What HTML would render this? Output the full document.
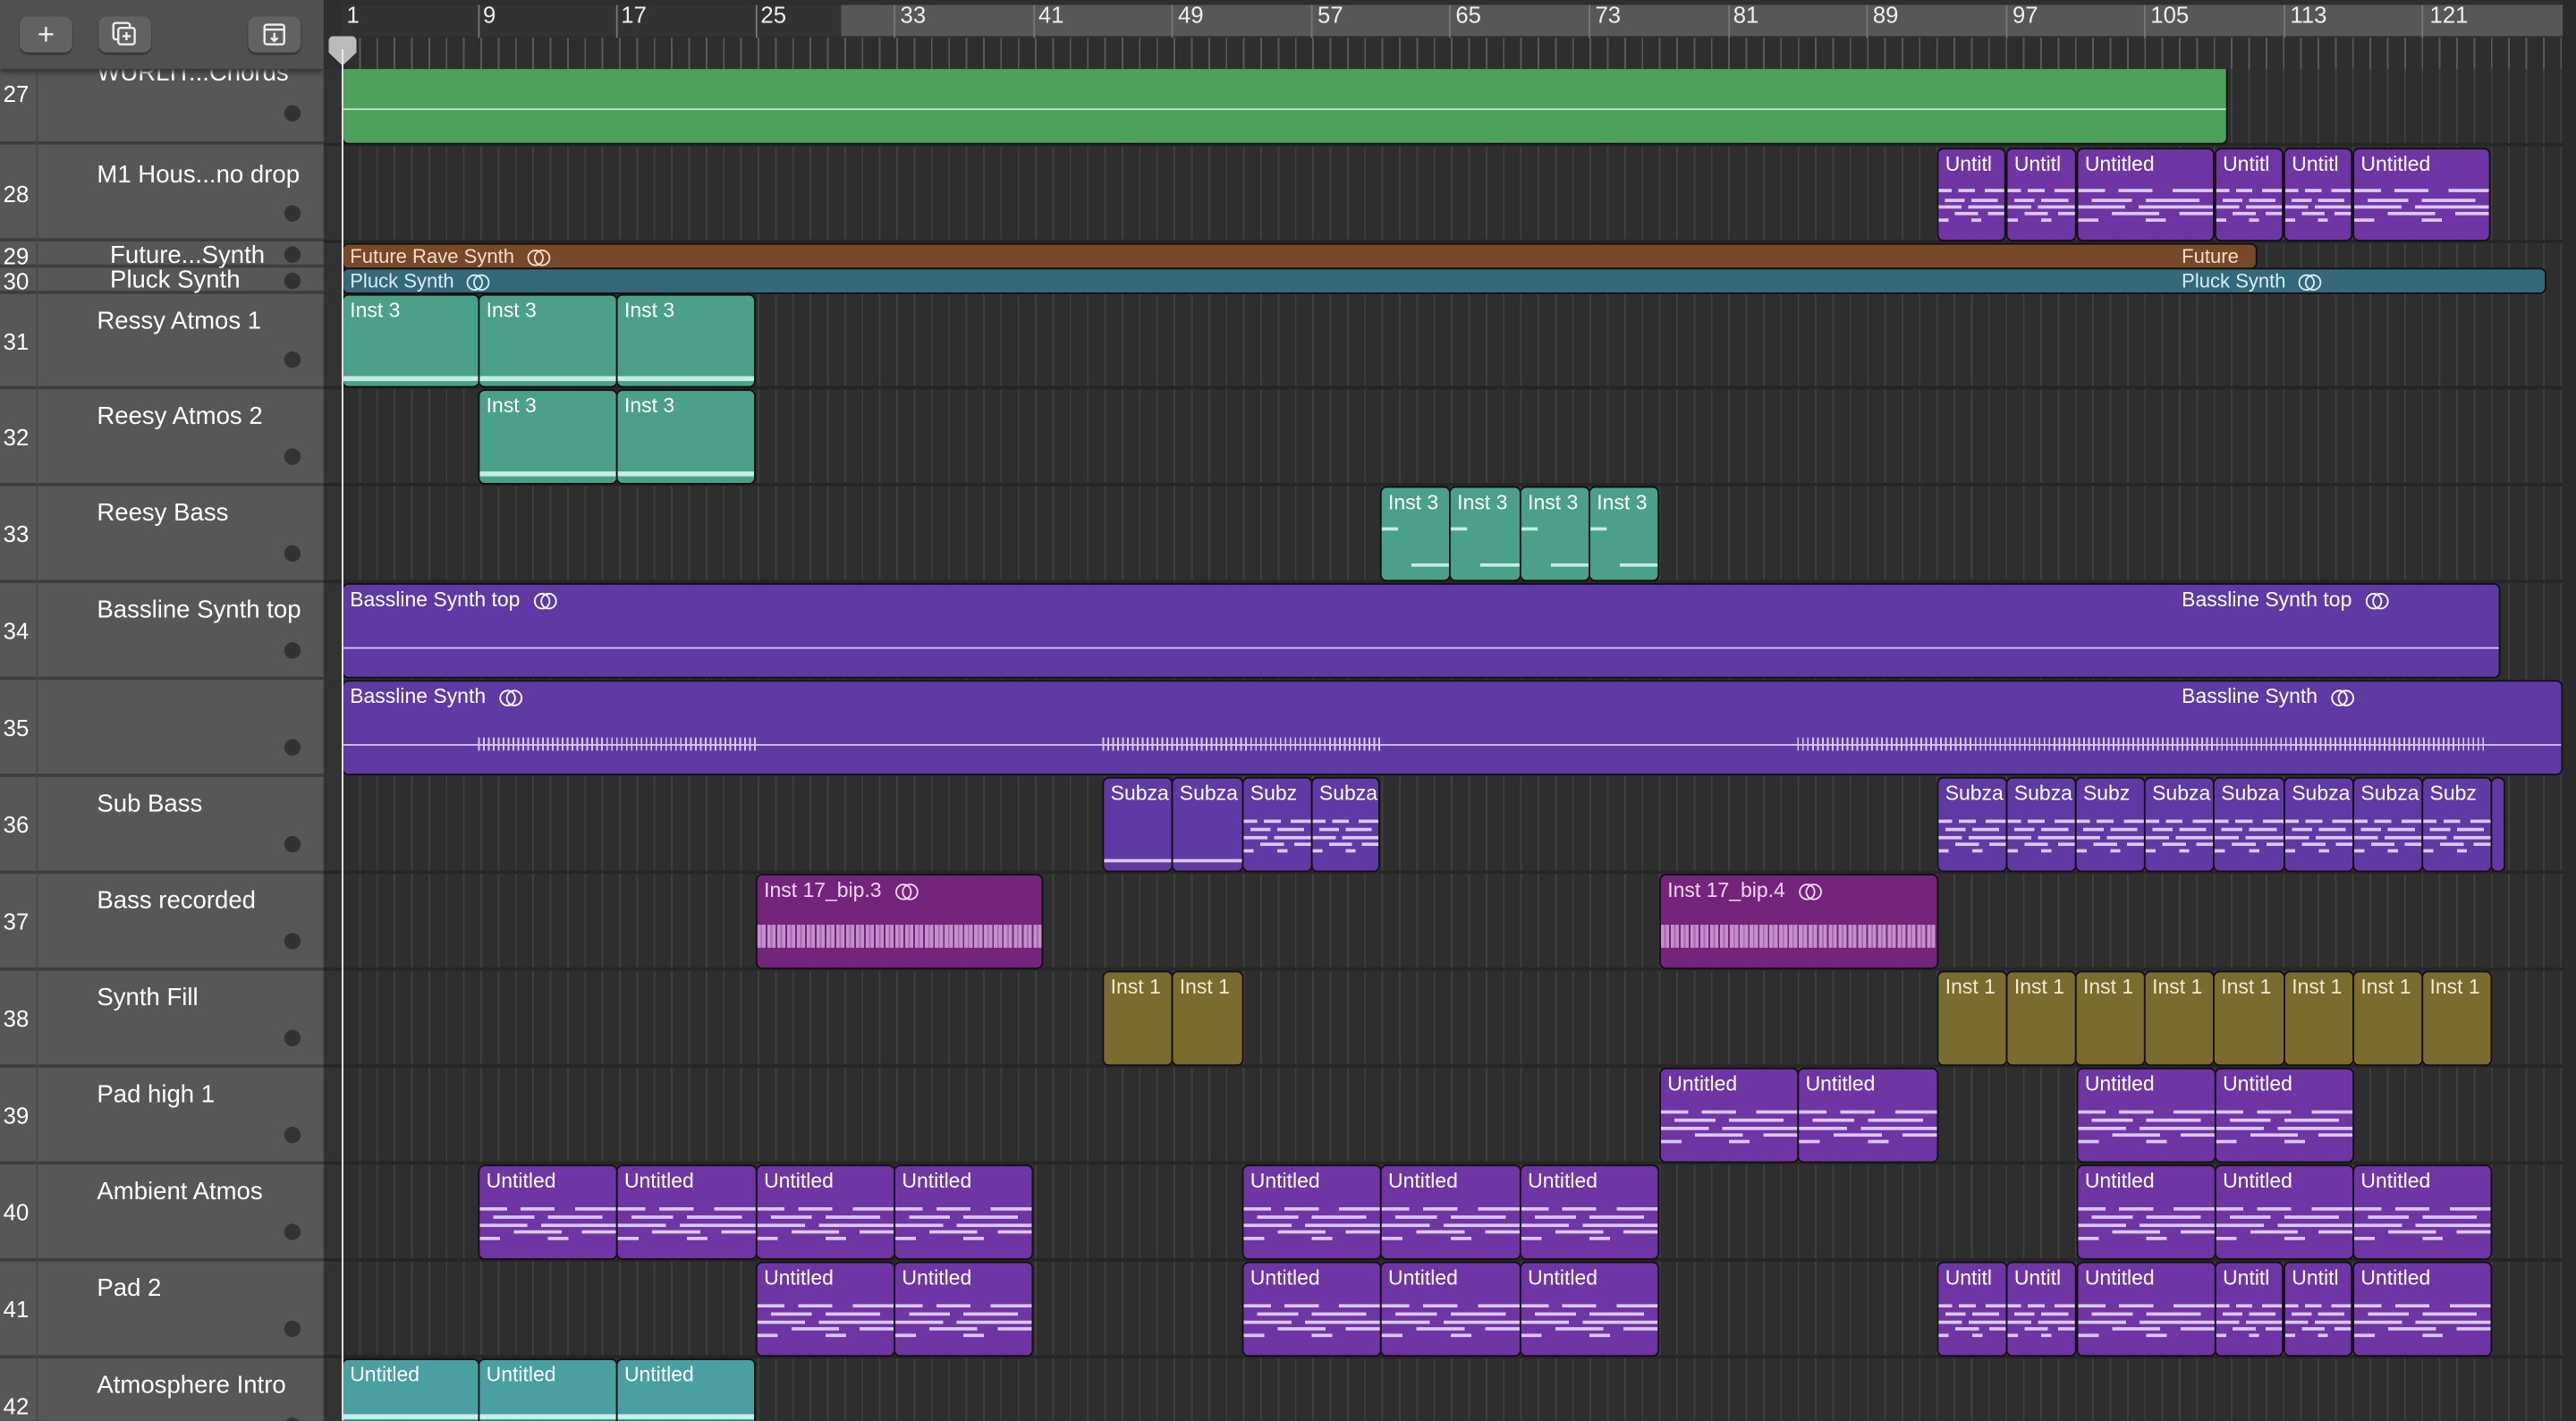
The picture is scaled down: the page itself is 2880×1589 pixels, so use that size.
<!DOCTYPE html>
<html><head><meta charset="utf-8"><style>
html,body{margin:0;padding:0;background:#2e2e2e;overflow:hidden;width:2880px;height:1588px}
#w{position:absolute;left:0;top:0;width:1568px;height:865px;transform:scale(1.836735);transform-origin:0 0;font-family:"Liberation Sans",sans-serif;overflow:hidden;background:#2e2e2e}
.grid{position:absolute;left:208px;top:42px;right:0;bottom:0;background:repeating-linear-gradient(90deg,#3f3f3f 0 1px,transparent 1px 10.55px)}
.hl{position:absolute;left:197px;right:0;height:2px;background:#262626}
.lp{position:absolute;left:0;width:197px;background:#575757;border-bottom:2px solid #3e3e3e;box-sizing:border-box}
.lp .n{position:absolute;left:2px;color:#fff;font-size:14px}
.lp .t{position:absolute;left:59px;color:#fff;font-size:15px;white-space:nowrap}
.lp .d{position:absolute;left:173px;width:10px;height:10px;border-radius:50%;background:#333}
.col{position:absolute;left:22px;top:42px;bottom:0;width:1px;background:#474747;z-index:3}
.r{position:absolute;border:1px solid #111;border-radius:4px;box-sizing:border-box;overflow:hidden;font-size:12.5px;color:#fff;padding:2px 4px;white-space:nowrap}
.p{background:#7035a5}.b{background:#5f3aa4}.g{background:#4aa08a}.o{background:#7a6b2e}.m{background:#74247a}.a{background:#4a9fa0}
.nt{position:absolute;left:0;right:0;top:44%;height:36%;background:
linear-gradient(90deg,#dcc6f2 0 20%,transparent 20% 30%,#dcc6f2 30% 55%,transparent 55% 70%,#dcc6f2 70%) 0 0/100% 2px no-repeat,
linear-gradient(90deg,transparent 0 10%,#dcc6f2 10% 40%,transparent 40% 50%,#dcc6f2 50% 90%,transparent 90%) 0 30%/100% 2px no-repeat,
linear-gradient(90deg,#dcc6f2 0 35%,transparent 35% 45%,#dcc6f2 45% 100%) 0 55%/100% 2px no-repeat,
linear-gradient(90deg,transparent 0 25%,#dcc6f2 25% 60%,transparent 60% 75%,#dcc6f2 75%) 0 80%/100% 2px no-repeat,
linear-gradient(90deg,#dcc6f2 0 15%,transparent 15% 50%,#dcc6f2 50% 65%,transparent 65%) 0 100%/100% 2px no-repeat}
.wl{position:absolute;left:0;right:0;height:1px;background:#ddd}
.wv{position:absolute;left:0;right:0;top:30px;height:14px;background:repeating-linear-gradient(90deg,#c48fcc 0 2px,#a66aae 2px 3px,#c48fcc 3px 5px,transparent 5px 6px)}
.ic{display:inline-block;margin-left:8px;width:14px;height:9px;vertical-align:-1px;position:relative}
.ic:before,.ic:after{content:"";position:absolute;top:0;width:8px;height:8px;border:1px solid currentColor;border-radius:50%}
.ic:before{left:0}.ic:after{left:4px}
.btn{position:absolute;top:10px;width:32px;height:22px;border-radius:5px;background:#626262;box-shadow:0 1px 1px #333;color:#eee;text-align:center;font-size:18px;line-height:22px}
.rn{position:absolute;top:1px;color:#eee;font-size:14px}
.rt{position:absolute;top:3px;height:20px;width:1px;background:#777}
</style></head><body><div id="w">
<div class="grid"></div>
<div style="position:absolute;left:197px;top:42px;width:11px;bottom:0;background:#333"></div>
<!-- ruler -->
<div style="position:absolute;left:197px;top:0;right:0;height:42px;background:#2e2e2e"></div>
<div style="position:absolute;left:208px;top:3px;width:304px;height:19px;background:#333"></div>
<div style="position:absolute;left:512px;top:3px;right:8px;height:19px;background:#575757"></div>
<div style="position:absolute;left:208px;top:23px;right:0;height:19px;background:repeating-linear-gradient(90deg,#5a5a5a 0 1px,transparent 1px 10.55px)"></div>
<div class="rn" style="left:211px">1</div><div class="rn" style="left:294px">9</div><div class="rn" style="left:378px">17</div><div class="rn" style="left:463px">25</div><div class="rn" style="left:548px">33</div><div class="rn" style="left:632px">41</div><div class="rn" style="left:717px">49</div><div class="rn" style="left:802px">57</div><div class="rn" style="left:886px">65</div><div class="rn" style="left:971px">73</div><div class="rn" style="left:1055px">81</div><div class="rn" style="left:1140px">89</div><div class="rn" style="left:1225px">97</div><div class="rn" style="left:1309px">105</div><div class="rn" style="left:1394px">113</div><div class="rn" style="left:1479px">121</div>
<div class="rt" style="left:291px"></div><div class="rt" style="left:375px"></div><div class="rt" style="left:460px"></div><div class="rt" style="left:544px"></div><div class="rt" style="left:629px"></div><div class="rt" style="left:713px"></div><div class="rt" style="left:798px"></div><div class="rt" style="left:882px"></div><div class="rt" style="left:967px"></div><div class="rt" style="left:1052px"></div><div class="rt" style="left:1136px"></div><div class="rt" style="left:1221px"></div><div class="rt" style="left:1305px"></div><div class="rt" style="left:1390px"></div><div class="rt" style="left:1474px"></div>
<div style="position:absolute;left:200px;top:22px;width:17px;height:18px;background:#bbb;border-radius:3px 3px 0 0;clip-path:polygon(0 0,100% 0,100% 55%,50% 100%,0 55%)"></div>
<!-- track headers -->
<div class="lp" style="top:42px;height:46px"><div class="t" style="top:-6px">WURLIT...Chords</div><div class="n" style="top:7px">27</div><div class="d" style="top:22px"></div></div>
<div class="lp" style="top:88px;height:59px"><div class="t" style="top:10px">M1 Hous...no drop</div><div class="n" style="top:22px">28</div><div class="d" style="top:37px"></div></div>
<div class="lp" style="top:147px;height:16px"><div class="t" style="top:0px;left:67px">Future...Synth</div><div class="n" style="top:1px">29</div><div class="d" style="top:3px"></div></div>
<div class="lp" style="top:163px;height:16px"><div class="t" style="top:-1px;left:67px">Pluck Synth</div><div class="n" style="top:0px">30</div><div class="d" style="top:3px"></div></div>
<div class="lp" style="top:179px;height:58px"><div class="t" style="top:8px">Ressy Atmos 1</div><div class="n" style="top:21px">31</div><div class="d" style="top:35px"></div></div>
<div class="lp" style="top:237px;height:59px"><div class="t" style="top:8px">Reesy Atmos 2</div><div class="n" style="top:21px">32</div><div class="d" style="top:36px"></div></div>
<div class="lp" style="top:296px;height:59px"><div class="t" style="top:8px">Reesy Bass</div><div class="n" style="top:21px">33</div><div class="d" style="top:36px"></div></div>
<div class="lp" style="top:355px;height:59px"><div class="t" style="top:8px">Bassline Synth top</div><div class="n" style="top:21px">34</div><div class="d" style="top:36px"></div></div>
<div class="lp" style="top:414px;height:59px"><div class="n" style="top:21px">35</div><div class="d" style="top:36px"></div></div>
<div class="lp" style="top:473px;height:59px"><div class="t" style="top:8px">Sub Bass</div><div class="n" style="top:21px">36</div><div class="d" style="top:36px"></div></div>
<div class="lp" style="top:532px;height:59px"><div class="t" style="top:8px">Bass recorded</div><div class="n" style="top:21px">37</div><div class="d" style="top:36px"></div></div>
<div class="lp" style="top:591px;height:59px"><div class="t" style="top:8px">Synth Fill</div><div class="n" style="top:21px">38</div><div class="d" style="top:36px"></div></div>
<div class="lp" style="top:650px;height:59px"><div class="t" style="top:8px">Pad high 1</div><div class="n" style="top:21px">39</div><div class="d" style="top:36px"></div></div>
<div class="lp" style="top:709px;height:59px"><div class="t" style="top:8px">Ambient Atmos</div><div class="n" style="top:21px">40</div><div class="d" style="top:36px"></div></div>
<div class="lp" style="top:768px;height:59px"><div class="t" style="top:8px">Pad 2</div><div class="n" style="top:21px">41</div><div class="d" style="top:36px"></div></div>
<div class="lp" style="top:827px;height:59px"><div class="t" style="top:8px">Atmosphere Intro</div><div class="n" style="top:21px">42</div><div class="d" style="top:36px"></div></div>
<div class="col"></div>
<!-- left panel header (on top) -->
<div style="position:absolute;left:0;top:0;width:197px;height:42px;background:#505050;box-shadow:0 2px 3px #333;z-index:4">
<div class="btn" style="left:12px">+</div>
<div class="btn" style="left:60px"><svg width="16" height="16" viewBox="0 0 16 16" style="margin-top:3px" fill="none" stroke="#eee" stroke-width="1.3"><rect x="1" y="1" width="10" height="10" rx="1.5"/><rect x="4" y="4" width="10" height="10" rx="1.5" fill="#626262"/><path d="M9 6.5v5M6.5 9h5"/></svg></div>
<div class="btn" style="left:151px"><svg width="16" height="16" viewBox="0 0 16 16" style="margin-top:3px" fill="none" stroke="#eee" stroke-width="1.3"><rect x="2" y="2" width="12" height="12" rx="1.5"/><path d="M2 5h12M8 7v5M6 10l2 2 2-2"/></svg></div>
</div>
<div class="hl" style="top:87px"></div><div class="hl" style="top:146px"></div><div class="hl" style="top:235px"></div><div class="hl" style="top:294px"></div><div class="hl" style="top:353px"></div><div class="hl" style="top:530px"></div><div class="hl" style="top:589px"></div><div class="hl" style="top:648px"></div><div class="hl" style="top:707px"></div><div class="hl" style="top:766px"></div><div class="hl" style="top:825px"></div>
<!-- regions -->
<div class="r" style="left:208px;top:42px;width:1148px;height:46px;background:#4ea15a;border-top:none;border-radius:0 0 4px 4px"><div class="wl" style="top:24px;background:#bfe3c3"></div></div>
<div class="r p" style="left:1179px;top:90px;width:42px;height:57px">Untitl<div class="nt"></div></div>
<div class="r p" style="left:1221px;top:90px;width:43px;height:57px">Untitl<div class="nt"></div></div>
<div class="r p" style="left:1264px;top:90px;width:84px;height:57px">Untitled<div class="nt"></div></div>
<div class="r p" style="left:1348px;top:90px;width:42px;height:57px">Untitl<div class="nt"></div></div>
<div class="r p" style="left:1390px;top:90px;width:42px;height:57px">Untitl<div class="nt"></div></div>
<div class="r p" style="left:1432px;top:90px;width:84px;height:57px">Untitled<div class="nt"></div></div>
<div class="r" style="left:208px;top:148px;width:1166px;height:16px;background:#784828;color:#f3dcc8;padding:0 4px;font-size:12px;line-height:15px">Future Rave Synth<span class="ic"></span><span style="position:absolute;left:1119px">Future</span></div>
<div class="r" style="left:208px;top:163px;width:1342px;height:16px;background:#356878;color:#d6eef5;padding:0 4px;font-size:12px;line-height:15px">Pluck Synth<span class="ic"></span><span style="position:absolute;left:1119px">Pluck Synth<span class="ic"></span></span></div>
<div class="r g" style="left:208px;top:179px;width:84px;height:57px">Inst 3<div class="wl" style="top:49px;height:3px;background:#c4ecdf"></div></div>
<div class="r g" style="left:291px;top:179px;width:85px;height:57px">Inst 3<div class="wl" style="top:49px;height:3px;background:#c4ecdf"></div></div>
<div class="r g" style="left:375px;top:179px;width:85px;height:57px">Inst 3<div class="wl" style="top:49px;height:3px;background:#c4ecdf"></div></div>
<div class="r g" style="left:291px;top:237px;width:85px;height:58px">Inst 3<div class="wl" style="top:49px;height:3px;background:#c4ecdf"></div></div>
<div class="r g" style="left:375px;top:237px;width:85px;height:58px">Inst 3<div class="wl" style="top:49px;height:3px;background:#c4ecdf"></div></div>
<div class="r g" style="left:840px;top:296px;width:43px;height:58px">Inst 3<div class="wl" style="top:24px;width:10px;height:2px;background:#c4ecdf"></div><div class="wl" style="top:46px;left:18px;height:2px;background:#c4ecdf"></div></div>
<div class="r g" style="left:882px;top:296px;width:44px;height:58px">Inst 3<div class="wl" style="top:24px;width:10px;height:2px;background:#c4ecdf"></div><div class="wl" style="top:46px;left:18px;height:2px;background:#c4ecdf"></div></div>
<div class="r g" style="left:925px;top:296px;width:43px;height:58px">Inst 3<div class="wl" style="top:24px;width:10px;height:2px;background:#c4ecdf"></div><div class="wl" style="top:46px;left:18px;height:2px;background:#c4ecdf"></div></div>
<div class="r g" style="left:967px;top:296px;width:43px;height:58px">Inst 3<div class="wl" style="top:24px;width:10px;height:2px;background:#c4ecdf"></div><div class="wl" style="top:46px;left:18px;height:2px;background:#c4ecdf"></div></div>
<div class="r b" style="left:208px;top:355px;width:1314px;height:58px">Bassline Synth top<span class="ic"></span><span style="position:absolute;left:1119px;top:2px">Bassline Synth top<span class="ic"></span></span><div class="wl" style="top:38px;background:#d8c8f0"></div></div>
<div class="r b" style="left:208px;top:414px;width:1352px;height:58px">Bassline Synth<span class="ic"></span><span style="position:absolute;left:1119px;top:2px">Bassline Synth<span class="ic"></span></span><div class="wl" style="top:38px;background:#d8c8f0"></div><div style="position:absolute;left:82px;width:170px;top:34px;height:8px;background:repeating-linear-gradient(90deg,#d8c8f0 0 1px,transparent 1px 3px)"></div><div style="position:absolute;left:462px;width:170px;top:34px;height:8px;background:repeating-linear-gradient(90deg,#d8c8f0 0 1px,transparent 1px 3px)"></div><div style="position:absolute;left:885px;width:420px;top:34px;height:8px;background:repeating-linear-gradient(90deg,#d8c8f0 0 1px,transparent 1px 3px)"></div></div>
<div class="r b" style="left:671px;top:473px;width:43px;height:58px">Subza<div class="wl" style="top:49px;height:2px;background:#d8c8f0"></div></div>
<div class="r b" style="left:713px;top:473px;width:44px;height:58px">Subza<div class="wl" style="top:49px;height:2px;background:#d8c8f0"></div></div>
<div class="r b" style="left:756px;top:473px;width:43px;height:58px">Subz<div class="nt"></div></div>
<div class="r b" style="left:798px;top:473px;width:42px;height:58px">Subza<div class="nt"></div></div>
<div class="r b" style="left:1179px;top:473px;width:43px;height:58px">Subza<div class="nt"></div></div>
<div class="r b" style="left:1221px;top:473px;width:43px;height:58px">Subza<div class="nt"></div></div>
<div class="r b" style="left:1263px;top:473px;width:43px;height:58px">Subz<div class="nt"></div></div>
<div class="r b" style="left:1305px;top:473px;width:43px;height:58px">Subza<div class="nt"></div></div>
<div class="r b" style="left:1347px;top:473px;width:44px;height:58px">Subza<div class="nt"></div></div>
<div class="r b" style="left:1390px;top:473px;width:43px;height:58px">Subza<div class="nt"></div></div>
<div class="r b" style="left:1432px;top:473px;width:43px;height:58px">Subza<div class="nt"></div></div>
<div class="r b" style="left:1474px;top:473px;width:43px;height:58px">Subz<div class="nt"></div></div>
<div class="r b" style="left:1516px;top:473px;width:9px;height:58px;padding:0"></div>
<div class="r m" style="left:460px;top:532px;width:175px;height:58px;color:#f0d8f2">Inst 17_bip.3<span class="ic"></span><div class="wv"></div></div>
<div class="r m" style="left:1010px;top:532px;width:170px;height:58px;color:#f0d8f2">Inst 17_bip.4<span class="ic"></span><div class="wv"></div></div>
<div class="r o" style="left:671px;top:591px;width:43px;height:58px;color:#f0ead0">Inst 1</div>
<div class="r o" style="left:713px;top:591px;width:44px;height:58px;color:#f0ead0">Inst 1</div>
<div class="r o" style="left:1179px;top:591px;width:43px;height:58px;color:#f0ead0">Inst 1</div>
<div class="r o" style="left:1221px;top:591px;width:43px;height:58px;color:#f0ead0">Inst 1</div>
<div class="r o" style="left:1263px;top:591px;width:43px;height:58px;color:#f0ead0">Inst 1</div>
<div class="r o" style="left:1305px;top:591px;width:43px;height:58px;color:#f0ead0">Inst 1</div>
<div class="r o" style="left:1347px;top:591px;width:44px;height:58px;color:#f0ead0">Inst 1</div>
<div class="r o" style="left:1390px;top:591px;width:43px;height:58px;color:#f0ead0">Inst 1</div>
<div class="r o" style="left:1432px;top:591px;width:43px;height:58px;color:#f0ead0">Inst 1</div>
<div class="r o" style="left:1474px;top:591px;width:43px;height:58px;color:#f0ead0">Inst 1</div>
<div class="r p" style="left:1010px;top:650px;width:85px;height:58px">Untitled<div class="nt"></div></div>
<div class="r p" style="left:1094px;top:650px;width:86px;height:58px">Untitled<div class="nt"></div></div>
<div class="r p" style="left:1264px;top:650px;width:85px;height:58px">Untitled<div class="nt"></div></div>
<div class="r p" style="left:1348px;top:650px;width:85px;height:58px">Untitled<div class="nt"></div></div>
<div class="r p" style="left:291px;top:709px;width:85px;height:58px">Untitled<div class="nt"></div></div>
<div class="r p" style="left:375px;top:709px;width:86px;height:58px">Untitled<div class="nt"></div></div>
<div class="r p" style="left:460px;top:709px;width:85px;height:58px">Untitled<div class="nt"></div></div>
<div class="r p" style="left:544px;top:709px;width:85px;height:58px">Untitled<div class="nt"></div></div>
<div class="r p" style="left:756px;top:709px;width:85px;height:58px">Untitled<div class="nt"></div></div>
<div class="r p" style="left:840px;top:709px;width:86px;height:58px">Untitled<div class="nt"></div></div>
<div class="r p" style="left:925px;top:709px;width:85px;height:58px">Untitled<div class="nt"></div></div>
<div class="r p" style="left:1264px;top:709px;width:85px;height:58px">Untitled<div class="nt"></div></div>
<div class="r p" style="left:1348px;top:709px;width:85px;height:58px">Untitled<div class="nt"></div></div>
<div class="r p" style="left:1432px;top:709px;width:85px;height:58px">Untitled<div class="nt"></div></div>
<div class="r p" style="left:460px;top:768px;width:85px;height:58px">Untitled<div class="nt"></div></div>
<div class="r p" style="left:544px;top:768px;width:85px;height:58px">Untitled<div class="nt"></div></div>
<div class="r p" style="left:756px;top:768px;width:85px;height:58px">Untitled<div class="nt"></div></div>
<div class="r p" style="left:840px;top:768px;width:86px;height:58px">Untitled<div class="nt"></div></div>
<div class="r p" style="left:925px;top:768px;width:85px;height:58px">Untitled<div class="nt"></div></div>
<div class="r p" style="left:1179px;top:768px;width:43px;height:58px">Untitl<div class="nt"></div></div>
<div class="r p" style="left:1221px;top:768px;width:43px;height:58px">Untitl<div class="nt"></div></div>
<div class="r p" style="left:1264px;top:768px;width:85px;height:58px">Untitled<div class="nt"></div></div>
<div class="r p" style="left:1348px;top:768px;width:42px;height:58px">Untitl<div class="nt"></div></div>
<div class="r p" style="left:1390px;top:768px;width:42px;height:58px">Untitl<div class="nt"></div></div>
<div class="r p" style="left:1432px;top:768px;width:85px;height:58px">Untitled<div class="nt"></div></div>
<div class="r a" style="left:208px;top:827px;width:84px;height:50px">Untitled<div class="wl" style="top:33px;height:3px;background:#c8eeee"></div></div>
<div class="r a" style="left:291px;top:827px;width:85px;height:50px">Untitled<div class="wl" style="top:33px;height:3px;background:#c8eeee"></div></div>
<div class="r a" style="left:375px;top:827px;width:85px;height:50px">Untitled<div class="wl" style="top:33px;height:3px;background:#c8eeee"></div></div>
<!-- playhead -->
<div style="position:absolute;left:208px;top:30px;width:1px;bottom:0;background:#eee"></div>
<div style="position:absolute;right:0;top:0;width:8px;bottom:0;background:#2a2a2a"></div>
</div></body></html>
